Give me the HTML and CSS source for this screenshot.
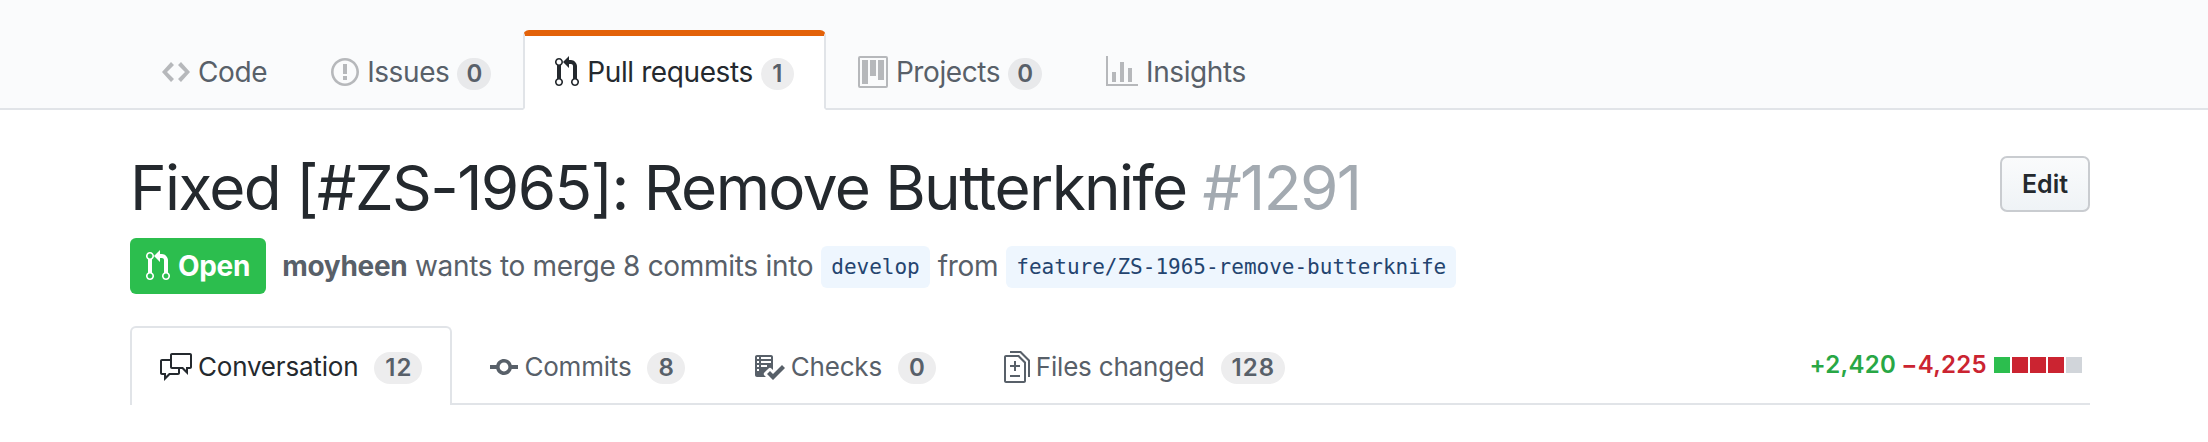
FILE: index.html
```html
<!DOCTYPE html>
<html lang="en">
<head>
    <meta charset="UTF-8">
    <meta name="viewport" content="width=device-width, initial-scale=1.0">
    <title>Fixed [#ZS-1965]: Remove Butterknife #1291</title>
    <link rel="stylesheet" href="styles.css">
</head>
<body>
    <!-- Repo navigation -->
    <nav class="repo-nav">
        <a class="repo-tab" href="#">
            <svg class="icon icon-w14" viewBox="0 0 14 16"><path d="M9.5 3L8 4.5 11.5 8 8 11.5 9.5 13 14 8 9.5 3zm-5 0L0 8l4.5 5L6 11.5 2.5 8 6 4.5 4.5 3z"/></svg>
            <span class="tab-label">Code</span>
        </a>
        <a class="repo-tab" href="#">
            <svg class="icon icon-w14" viewBox="0 0 14 16"><path d="M7 2.3c3.14 0 5.7 2.56 5.7 5.7s-2.56 5.7-5.7 5.7A5.71 5.71 0 0 1 1.3 8c0-3.14 2.56-5.7 5.7-5.7zM7 1C3.14 1 0 4.14 0 8s3.14 7 7 7 7-3.14 7-7-3.14-7-7-7zm1 3H6v5h2V4zm0 6H6v2h2v-2z"/></svg>
            <span class="tab-label">Issues</span>
            <span class="counter">0</span>
        </a>
        <a class="repo-tab selected" href="#">
            <svg class="icon icon-w12" viewBox="0 0 12 16"><path d="M11 11.28V5c-.03-.78-.34-1.47-.94-2.06C9.46 2.35 8.78 2.03 8 2H7V0L4 3l3 3V4h1c.27.02.48.11.69.31.21.2.3.42.31.69v6.28A1.993 1.993 0 0 0 10 15a1.993 1.993 0 0 0 1-3.72zm-1 2.92c-.66 0-1.2-.55-1.2-1.2 0-.65.55-1.2 1.2-1.2.65 0 1.2.55 1.2 1.2 0 .65-.55 1.2-1.2 1.2zM4 3c0-1.11-.89-2-2-2a1.993 1.993 0 0 0-1 3.72v6.56A1.993 1.993 0 0 0 2 15a1.993 1.993 0 0 0 1-3.72V4.72c.59-.34 1-.98 1-1.72zm-.8 10c0 .66-.55 1.2-1.2 1.2-.65 0-1.2-.55-1.2-1.2 0-.65.55-1.2 1.2-1.2.65 0 1.2.55 1.2 1.2zM2 4.2C1.34 4.2.8 3.65.8 3c0-.65.55-1.2 1.2-1.2.65 0 1.2.55 1.2 1.2 0 .65-.55 1.2-1.2 1.2z"/></svg>
            <span class="tab-label">Pull requests</span>
            <span class="counter">1</span>
        </a>
        <a class="repo-tab" href="#">
            <svg class="icon icon-w15" viewBox="0 0 15 16"><path d="M10 12h3V2h-3v10zm-4-2h3V2H6v8zm-4 4h3V2H2v12zm-1 1h13V1H1v14zM14 0H1a1 1 0 0 0-1 1v14a1 1 0 0 0 1 1h13a1 1 0 0 0 1-1V1a1 1 0 0 0-1-1z"/></svg>
            <span class="tab-label">Projects</span>
            <span class="counter">0</span>
        </a>
        <a class="repo-tab" href="#">
            <svg class="icon icon-w16" viewBox="0 0 16 16"><path d="M16 14v1H0V0h1v14h15zM5 13H3V8h2v5zm4 0H7V3h2v10zm4 0h-2V6h2v7z"/></svg>
            <span class="tab-label">Insights</span>
        </a>
    </nav>

    <main class="content">
        <!-- Pull request header -->
        <div class="title-row">
            <h1 class="pr-title">Fixed [#ZS-1965]: Remove Butterknife <span class="pr-number">#1291</span></h1>
            <button class="btn-edit">Edit</button>
        </div>

        <div class="meta-row">
            <span class="state-badge">
                <svg class="icon icon-w12" viewBox="0 0 12 16"><path d="M11 11.28V5c-.03-.78-.34-1.47-.94-2.06C9.46 2.35 8.78 2.03 8 2H7V0L4 3l3 3V4h1c.27.02.48.11.69.31.21.2.3.42.31.69v6.28A1.993 1.993 0 0 0 10 15a1.993 1.993 0 0 0 1-3.72zm-1 2.92c-.66 0-1.2-.55-1.2-1.2 0-.65.55-1.2 1.2-1.2.65 0 1.2.55 1.2 1.2 0 .65-.55 1.2-1.2 1.2zM4 3c0-1.11-.89-2-2-2a1.993 1.993 0 0 0-1 3.72v6.56A1.993 1.993 0 0 0 2 15a1.993 1.993 0 0 0 1-3.72V4.72c.59-.34 1-.98 1-1.72zm-.8 10c0 .66-.55 1.2-1.2 1.2-.65 0-1.2-.55-1.2-1.2 0-.65.55-1.2 1.2-1.2.65 0 1.2.55 1.2 1.2zM2 4.2C1.34 4.2.8 3.65.8 3c0-.65.55-1.2 1.2-1.2.65 0 1.2.55 1.2 1.2 0 .65-.55 1.2-1.2 1.2z"/></svg>
                Open
            </span>
            <span class="meta-text"><strong>moyheen</strong> wants to merge 8 commits into</span>
            <span class="branch">develop</span>
            <span class="meta-text">from</span>
            <span class="branch">feature/ZS-1965-remove-butterknife</span>
        </div>

        <!-- Pull request tabs -->
        <div class="pr-tabs">
            <a class="pr-tab selected" href="#">
                <svg class="icon icon-w16" viewBox="0 0 16 16"><path d="M15 1H6c-.55 0-1 .45-1 1v2H1c-.55 0-1 .45-1 1v6c0 .55.45 1 1 1h1v3l3-3h4c.55 0 1-.45 1-1V9h1l3 3V9h1c.55 0 1-.45 1-1V2c0-.55-.45-1-1-1zM9 11H4.5L3 12.5V11H1V5h4v3c0 .55.45 1 1 1h3v2zm6-3h-2v1.5L11.5 8H6V2h9v6z"/></svg>
                <span>Conversation</span>
                <span class="counter">12</span>
            </a>
            <a class="pr-tab" href="#">
                <svg class="icon icon-w14" viewBox="0 0 14 16"><path d="M10.86 7c-.45-1.72-2-3-3.86-3-1.86 0-3.41 1.28-3.86 3H0v2h3.14c.45 1.72 2 3 3.86 3 1.86 0 3.41-1.28 3.86-3H14V7h-3.14zM7 10.2c-1.22 0-2.2-.98-2.2-2.2 0-1.22.98-2.2 2.2-2.2 1.22 0 2.2.98 2.2 2.2 0 1.22-.98 2.2-2.2 2.2z"/></svg>
                <span>Commits</span>
                <span class="counter">8</span>
            </a>
            <a class="pr-tab" href="#">
                <svg class="icon icon-w16" viewBox="0 0 16 16"><path d="M16 8.5l-6 6-3-3L8.5 10l1.5 1.5L14.5 7 16 8.5zM5.7 12.2l.8.8H2c-.55 0-1-.45-1-1V3c0-.55.45-1 1-1h7c.55 0 1 .45 1 1v6.5l-.8-.8c-.39-.39-1.03-.39-1.42 0L5.7 10.8a.996.996 0 0 0 0 1.41v-.01zM4 4h5V3H4v1zm0 2h5V5H4v1zm0 2h3V7H4v1zM3 9H2v1h1V9zm0-2H2v1h1V7zm0-2H2v1h1V5zm0-2H2v1h1V3z"/></svg>
                <span>Checks</span>
                <span class="counter">0</span>
            </a>
            <a class="pr-tab" href="#">
                <svg class="icon icon-w13" viewBox="0 0 13 16"><path d="M6 7h2v1H6v2H5V8H3V7h2V5h1v2zm-3 6h5v-1H3v1zM7.5 2L11 5.5V15c0 .55-.45 1-1 1H1c-.55 0-1-.45-1-1V3c0-.55.45-1 1-1h6.5zM10 6L7 3H1v12h9V6zM8.5 0H3v1h5l4 4v8h1V4.5L8.5 0z"/></svg>
                <span>Files changed</span>
                <span class="counter">128</span>
            </a>
            <div class="diffstat">
                <span class="added">+2,420</span>
                <span class="removed">&minus;4,225</span>
                <span class="blocks">
                    <span class="block block-add"></span>
                    <span class="block block-del"></span>
                    <span class="block block-del"></span>
                    <span class="block block-del"></span>
                    <span class="block block-neutral"></span>
                </span>
            </div>
        </div>
    </main>
</body>
</html>
```

FILE: styles.css
```css
body {
    font-family: Inter, "Noto Sans", Arial, sans-serif;
    background-color: #fff;
    color: #24292e;
    margin: 0;
}

a {
    text-decoration: none;
}

.icon {
    display: block;
    height: 32px;
    flex: none;
    fill: currentColor;
    fill-rule: evenodd;
}

.icon-w12 { width: 24px; }
.icon-w13 { width: 26px; }
.icon-w14 { width: 28px; }
.icon-w15 { width: 30px; }
.icon-w16 { width: 32px; }

.counter {
    display: inline-block;
    min-width: 33px;
    box-sizing: border-box;
    height: 32px;
    line-height: 32px;
    padding: 0 9px;
    border-radius: 16px;
    background-color: rgba(27, 31, 35, 0.08);
    color: #586069;
    font-size: 24px;
    font-weight: 600;
    text-align: center;
    letter-spacing: 0;
}

/* Repo navigation */
.repo-nav {
    display: flex;
    padding: 30px 0 0 130px;
    background-color: #fafbfc;
    border-bottom: 2px solid #e1e4e8;
}

.repo-tab {
    display: flex;
    align-items: center;
    gap: 8px;
    height: 80px;
    box-sizing: border-box;
    margin-bottom: -2px;
    padding: 4px 30px 0;
    border: 2px solid transparent;
    border-top-width: 6px;
    border-bottom-width: 2px;
    border-radius: 6px 6px 0 0;
    color: #586069;
    font-size: 28px;
    letter-spacing: -0.4px;
}

.repo-tab .icon {
    margin-bottom: 4px;
    color: rgba(27, 31, 35, 0.3);
}

.tab-label {
    padding-bottom: 4px;
}

.repo-tab.selected {
    background-color: #fff;
    border-color: #e36209 #e1e4e8 #fff;
    color: #24292e;
}

.repo-tab.selected .icon {
    color: #24292e;
}

/* Header */
.content {
    padding: 38px 118px 0 130px;
}

.title-row {
    display: flex;
    justify-content: space-between;
    align-items: flex-start;
}

.pr-title {
    margin: 0;
    font-size: 62px;
    font-weight: 400;
    line-height: 80px;
    letter-spacing: -1.6px;
}

.pr-number {
    color: #a3aab1;
}

.btn-edit {
    width: 90px;
    height: 56px;
    margin-top: 8px;
    padding: 0;
    border: 2px solid #c9ccd0;
    border-radius: 7px;
    background: linear-gradient(#fafbfc, #eff3f6);
    color: #24292e;
    font-family: inherit;
    font-size: 25px;
    font-weight: 600;
}

.meta-row {
    display: flex;
    align-items: center;
    margin-top: 10px;
    gap: 8px;
}

.state-badge {
    display: flex;
    align-items: center;
    gap: 8px;
    height: 56px;
    padding: 0 16px;
    margin-right: 8px;
    border-radius: 6px;
    background-color: #2cbe4e;
    color: #fff;
    font-size: 28px;
    font-weight: 700;
    letter-spacing: -0.3px;
}

.meta-text {
    color: #586069;
    font-size: 28px;
    letter-spacing: -0.3px;
}

.meta-text strong {
    font-weight: 700;
}

.branch {
    height: 42px;
    line-height: 42px;
    margin-top: 2px;
    padding: 0 10px;
    border-radius: 6px;
    background-color: #eef6fe;
    color: #24446f;
    font-family: "DejaVu Sans Mono", monospace;
    font-size: 21px;
}

/* Pull request tabs */
.pr-tabs {
    display: flex;
    align-items: stretch;
    margin-top: 32px;
    height: 79px;
    box-sizing: border-box;
    border-bottom: 2px solid #e1e4e8;
}

.pr-tab {
    display: flex;
    align-items: center;
    gap: 6px;
    height: 79px;
    box-sizing: border-box;
    padding: 0 28px;
    margin-right: 8px;
    border: 2px solid transparent;
    border-bottom: 0;
    border-radius: 6px 6px 0 0;
    color: #586069;
    font-size: 26px;
    letter-spacing: -0.2px;
}

.pr-tab .counter {
    margin: 3px 0 0 10px;
    padding: 0 10px 0 11px;
    letter-spacing: 1px;
}

.pr-tab.selected {
    background-color: #fff;
    border-color: #e1e4e8;
    color: #24292e;
}

.diffstat {
    display: flex;
    align-items: center;
    gap: 5px;
    margin-left: auto;
    padding-right: 8px;
    font-size: 24px;
    font-weight: 600;
    letter-spacing: 0.3px;
}

.blocks {
    display: flex;
    gap: 2px;
    margin-left: 2px;
}

.added {
    color: #28a745;
}

.removed {
    color: #cb2431;
}

.block {
    width: 16px;
    height: 16px;
}

.block-add { background-color: #2cbe4e; }
.block-del { background-color: #cb2431; }
.block-neutral { background-color: #d1d5da; }
```
